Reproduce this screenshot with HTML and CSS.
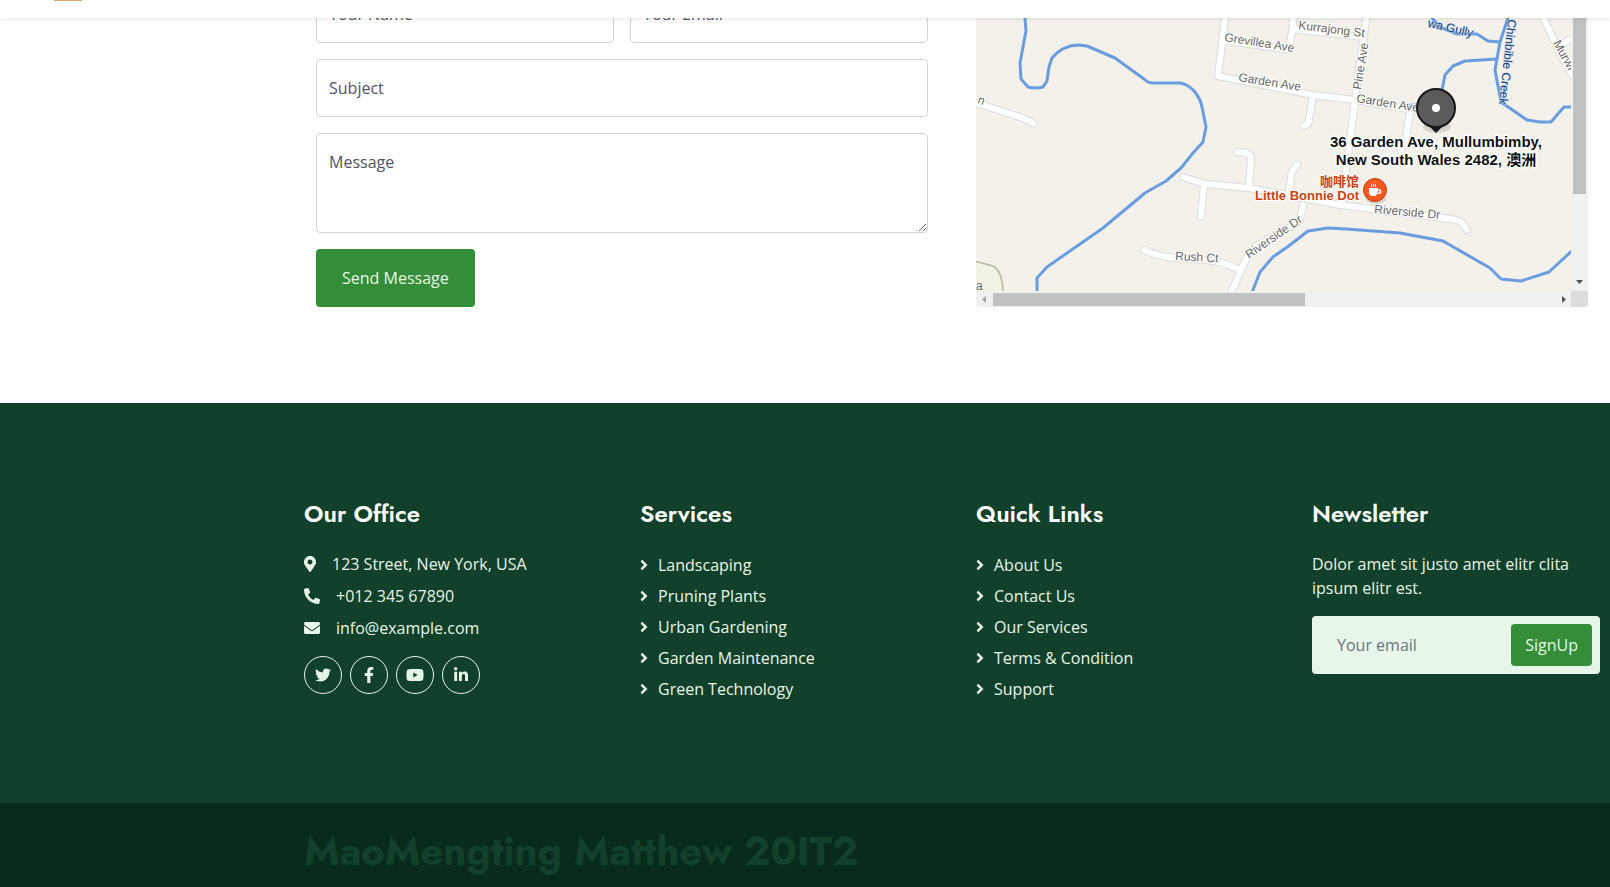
FILE: index.html
```html
<!DOCTYPE html>
<html lang="en">
<head>
<meta charset="utf-8">
<title>Gardener - Contact</title>
<meta name="viewport" content="width=device-width, initial-scale=1">
<link rel="stylesheet" href="styles.css">
</head>
<body>
<svg class="sprite" aria-hidden="true">
  <symbol id="chevron" viewBox="0 0 256 512"><path d="M224.3 273l-136 136c-9.400 9.400-24.600 9.400-33.900 0l-22.600-22.600c-9.400-9.400-9.400-24.600 0-33.900l96.400-96.400-96.400-96.400c-9.400-9.400-9.400-24.600 0-33.900L54.300 103c9.400-9.400 24.600-9.400 33.900 0l136 136c9.500 9.400 9.500 24.600.1 34z"/></symbol>
</svg>

<header class="topbar"><span class="logo-edge"></span></header>

<main>
  <section class="contact">
    <form class="contact-form">
      <input class="field" type="text" aria-label="Your Name" placeholder="Your Name">
      <input class="field" type="email" aria-label="Your Email" placeholder="Your Email">
      <input class="field wide" type="text" aria-label="Subject" placeholder="Subject">
      <textarea class="field wide message" aria-label="Message" placeholder="Message"></textarea>
      <button class="btn send" type="submit">Send Message</button>
    </form>

    <div class="map">
      <svg class="map-canvas" viewBox="976 -15 595 306" preserveAspectRatio="xMinYMin slice" role="img" aria-label="Map of Mullumbimby">
        <defs>
          <g id="roads" fill="none" stroke-linecap="round" stroke-linejoin="round">
            <path d="M1229 -15L1218 76L1313 95L1355 100L1413 110M1313 95L1309 120Q1309 125 1303 126"/>
            <path d="M1292 -15L1293 29L1363 37M1293 27L1289 47Q1288 50 1284 49L1226 41"/>
            <path d="M1371 -15L1355 100L1342 203"/>
            <path d="M1237 152L1246 153Q1252 154 1251 160L1249 188"/>
            <path d="M1183 177L1205 184L1249 188L1340 205L1420 215L1457 220Q1463 222 1467 230M1204 185L1201 217"/>
            <path d="M1297 165L1293 170Q1291 173 1291 178L1289 192"/>
            <path d="M1303 205L1301 216Q1299 223 1290 227L1258 245Q1250 250 1246 259L1230 295"/>
            <path d="M1144 250Q1158 257 1177 258L1205 260Q1222 261 1240 270"/>
            <path d="M970 101L1020 117Q1028 120 1033 123"/>
            <path d="M1410 112L1406 138L1401 152"/>
            <path d="M1528 -15L1545 21L1562 57L1580 88M1560 45L1580 34"/>
          </g>
        </defs>
        <path class="land" d="M970 -20h610v320H970z"/>
        <path class="park" d="M970 260L993 266Q1003 271 1003 295H970z"/>
        <path class="track" d="M970 260L993 266Q1003 271 1003 295"/>
        <use href="#roads" class="road-edge"/>
        <use href="#roads" class="road"/>
        <g class="water">
          <path d="M1023 -15L1025 18L1026 31L1020 63L1021 79L1028 87Q1035 89 1043 87L1047 81L1049 67L1052 58Q1063 45 1079 45L1087 46L1115 58L1144 79Q1148 83 1153 83H1180Q1188 84 1195 92Q1201 100 1202 107L1206 127L1203 142L1193 153L1181 168L1166 181L1145 193L1103 228L1047 267L1037 278V295"/>
          <path d="M1424 -15L1432 18L1440 27L1457 34H1477L1488 41L1500 42"/>
          <path d="M1513 -15L1508 18L1500 42L1495 70L1501 102L1527 120L1540 122H1551L1564 107H1575"/>
          <path d="M1497 59L1465 61L1453 66L1445 75L1442 90L1432 105H1409"/>
          <path d="M1251 295L1260 272L1273 257L1290 245L1308 231L1328 228L1346 229L1400 233L1443 241L1490 268L1501 279L1521 281L1549 272L1575 248"/>
        </g>
        <g class="street">
          <text x="1224" y="41" transform="rotate(9 1224 41)">Grevillea Ave</text>
          <text x="1298" y="29" transform="rotate(7 1298 29)">Kurrajong St</text>
          <text x="1238" y="81" transform="rotate(9 1238 81)">Garden Ave</text>
          <text x="1356" y="102" transform="rotate(9 1356 102)">Garden Ave</text>
          <text x="1361" y="90" transform="rotate(-81 1361 90)">Pine Ave</text>
          <text x="1374" y="213" transform="rotate(5 1374 213)">Riverside Dr</text>
          <text x="1249" y="259" transform="rotate(-35 1249 259)">Riverside Dr</text>
          <text x="1175" y="260" transform="rotate(3 1175 260)">Rush Ct</text>
          <text x="1553" y="43" transform="rotate(61 1553 43)">Murwi</text>
          <text x="977" y="103" transform="rotate(18 977 103)">n</text>
          <text x="976" y="290">a</text>
        </g>
        <g class="street stream">
          <text x="1472" y="37" text-anchor="end" transform="rotate(13 1472 37)">wa Gully</text>
          <text x="1508" y="19" transform="rotate(96 1508 19)">Chinbible Creek</text>
        </g>
        <g>
          <ellipse class="shade" cx="1437" cy="127" rx="14" ry="6"/>
          <path class="pin-tip" d="M1427 124L1436 133L1445 124z"/>
          <circle class="pin" cx="1436" cy="108" r="19"/>
          <circle class="white" cx="1436" cy="108" r="4"/>
        </g>
        <g class="place" text-anchor="middle">
          <text x="1436" y="147">36 Garden Ave, Mullumbimby,</text>
          <text x="1436" y="165">New South Wales 2482, 澳洲</text>
        </g>
        <g class="cafe" text-anchor="end">
          <text x="1359" y="186">咖啡馆</text>
          <text x="1359" y="200">Little Bonnie Dot</text>
        </g>
        <ellipse class="shade" cx="1376" cy="199" rx="10" ry="5"/>
        <circle class="cafe-dot" cx="1375" cy="190" r="11.500"/>
        <path class="white" d="M1369 188h9v1h1a2.500 2.500 0 0 1 0 5h-2l-1 2h-5l-2-2.500zM1378 190v3a1.500 1.500 0 0 0 0-3zM1371 184h1v3h-1zM1373 184h1v3h-1zM1375 184h1v3h-1z"/>
      </svg>
      <div class="vbar" aria-hidden="true"><span class="vthumb"></span><svg class="arrow" viewBox="0 0 7 4"><path d="M0 0h7L3.500 4z"/></svg></div>
      <div class="hbar" aria-hidden="true"><svg class="arrow side dim" viewBox="0 0 4 7"><path d="M4 0v7L0 3.500z"/></svg><span class="track-area"><span class="hthumb"></span></span><svg class="arrow side" viewBox="0 0 4 7"><path d="M0 0v7l4-3.500z"/></svg></div>
      <div class="corner"></div>
    </div>
  </section>
</main>

<footer>
  <div class="columns">
    <section>
      <h4>Our Office</h4>
      <p class="line"><svg width="12" height="16" viewBox="0 0 384 512"><path d="M172.300 501.700C27 291 0 269.400 0 192 0 86 86 0 192 0s192 86 192 192c0 77.400-27 99-172.300 309.700-9.500 13.800-29.900 13.800-39.400 0zM192 272c44.200 0 80-35.800 80-80s-35.800-80-80-80-80 35.800-80 80 35.800 80 80 80z"/></svg>123 Street, New York, USA</p>
      <p class="line"><svg width="16" height="16" viewBox="0 0 512 512"><path d="M493.400 24.600l-104-24c-11.300-2.600-22.900 3.300-27.500 13.900l-48 112c-4.200 9.800-1.400 21.300 6.900 28l60.600 49.600c-36 76.700-98.900 140.500-177.200 177.200l-49.600-60.600c-6.800-8.300-18.200-11.100-28-6.900l-112 48C3.900 366.500-2 378.100.6 389.400l24 104C27.100 504.200 36.700 512 48 512c256.100 0 464-207.500 464-464 0-11.200-7.700-20.900-18.600-23.400z" transform="matrix(-1 0 0 1 512 0)"/></svg>+012 345 67890</p>
      <p class="line"><svg width="16" height="16" viewBox="0 0 512 512"><path d="M502.300 190.800c3.900-3.100 9.700-.2 9.700 4.700V400c0 26.500-21.500 48-48 48H48c-26.500 0-48-21.500-48-48V195.600c0-5 5.700-7.800 9.700-4.700 22.400 17.400 52.100 39.500 154.100 113.600 21.100 15.400 56.700 47.800 92.200 47.600 35.700.3 72-32.800 92.300-47.600 102-74.100 131.600-96.300 154-113.700zM256 320c23.200.4 56.600-29.200 73.400-41.400 132.700-96.300 142.800-104.700 173.400-128.700 5.800-4.500 9.200-11.500 9.200-18.900v-19c0-26.500-21.500-48-48-48H48c-26.500 0-48 21.500-48 48v19c0 7.400 3.400 14.300 9.200 18.900 30.600 23.900 40.700 32.400 173.400 128.700 16.800 12.200 50.200 41.800 73.400 41.400z"/></svg>info@example.com</p>
      <div class="social">
        <a href="#" aria-label="Twitter"><svg width="16" height="16" viewBox="0 0 512 512"><path d="M459.370 151.716c.325 4.548.325 9.097.325 13.645 0 138.720-105.583 298.558-298.558 298.558-59.452 0-114.680-17.219-161.137-47.106 8.447.974 16.568 1.299 25.340 1.299 49.055 0 94.213-16.568 130.274-44.832-46.132-.975-84.792-31.188-98.112-72.772 6.498.974 12.995 1.624 19.818 1.624 9.421 0 18.843-1.300 27.614-3.573-48.081-9.747-84.143-51.980-84.143-102.985v-1.299c13.969 7.797 30.214 12.670 47.431 13.319-28.264-18.843-46.781-51.005-46.781-87.391 0-19.492 5.197-37.360 14.294-52.954 51.655 63.675 129.300 105.258 216.365 109.807-1.624-7.797-2.599-15.918-2.599-24.040 0-57.828 46.782-104.934 104.934-104.934 30.213 0 57.502 12.670 76.670 33.137 23.715-4.548 46.456-13.320 66.599-25.340-7.798 24.366-24.366 44.833-46.132 57.827 21.117-2.273 41.584-8.122 60.426-16.243-14.292 20.791-32.161 39.308-52.628 54.253z"/></svg></a>
        <a href="#" aria-label="Facebook"><svg width="10" height="16" viewBox="0 0 320 512"><path d="M279.140 288l14.220-92.660h-88.910v-60.130c0-25.350 12.420-50.060 52.240-50.060h40.420V6.260S260.430 0 225.360 0c-73.220 0-121.080 44.380-121.080 124.720v70.620H22.890V288h81.390v224h100.170V288z"/></svg></a>
        <a href="#" aria-label="YouTube"><svg width="18" height="16" viewBox="0 0 576 512"><path d="M549.655 124.083c-6.281-23.650-24.787-42.276-48.284-48.597C458.781 64 288 64 288 64S117.220 64 74.629 75.486c-23.497 6.322-42.003 24.947-48.284 48.597-11.412 42.867-11.412 132.305-11.412 132.305s0 89.438 11.412 132.305c6.281 23.650 24.787 41.500 48.284 47.821C117.220 448 288 448 288 448s170.780 0 213.371-11.486c23.497-6.321 42.003-24.171 48.284-47.821 11.412-42.867 11.412-132.305 11.412-132.305s0-89.438-11.412-132.305zm-317.510 213.508V175.185l142.739 81.205-142.739 81.201z"/></svg></a>
        <a href="#" aria-label="LinkedIn"><svg width="14" height="16" viewBox="0 0 448 512"><path d="M100.280 448H7.400V148.900h92.880zM53.790 108.100C24.090 108.100 0 83.500 0 53.800a53.790 53.790 0 0 1 107.580 0c0 29.700-24.100 54.300-53.790 54.300zM447.900 448h-92.680V302.400c0-34.700-.7-79.200-48.290-79.200-48.290 0-55.690 37.700-55.690 76.700V448h-92.780V148.900h89.080v40.800h1.300c12.400-23.500 42.690-48.300 87.880-48.300 94 0 111.280 61.900 111.280 142.300V448z"/></svg></a>
      </div>
    </section>
    <section>
      <h4>Services</h4>
      <nav class="links">
        <a href="#"><svg><use href="#chevron"/></svg>Landscaping</a>
        <a href="#"><svg><use href="#chevron"/></svg>Pruning Plants</a>
        <a href="#"><svg><use href="#chevron"/></svg>Urban Gardening</a>
        <a href="#"><svg><use href="#chevron"/></svg>Garden Maintenance</a>
        <a href="#"><svg><use href="#chevron"/></svg>Green Technology</a>
      </nav>
    </section>
    <section>
      <h4>Quick Links</h4>
      <nav class="links">
        <a href="#"><svg><use href="#chevron"/></svg>About Us</a>
        <a href="#"><svg><use href="#chevron"/></svg>Contact Us</a>
        <a href="#"><svg><use href="#chevron"/></svg>Our Services</a>
        <a href="#"><svg><use href="#chevron"/></svg>Terms &amp; Condition</a>
        <a href="#"><svg><use href="#chevron"/></svg>Support</a>
      </nav>
    </section>
    <section>
      <h4>Newsletter</h4>
      <p class="blurb">Dolor amet sit justo amet elitr clita ipsum elitr est.</p>
      <form class="signup">
        <input type="email" aria-label="Your email" placeholder="Your email">
        <button class="btn" type="submit">SignUp</button>
      </form>
    </section>
  </div>
  <div class="copyright"><h1>MaoMengting Matthew 20IT2</h1></div>
</footer>
</body>
</html>
```
FILE: styles.css
```css
:root {
  --primary: #348e38;
  --light: #e8f5e9;
  --dark: #11412a;
  --heading: Jost, "Lato", sans-serif;
}

* { box-sizing: border-box; }

body {
  margin: 0;
  overflow-x: clip;
  background: #fff;
  color: #525368;
  font: 16px/24px "Open Sans", sans-serif;
}

h1, h4, p { margin: 0; }
a { color: inherit; text-decoration: none; }
input, textarea, button { font: inherit; }
.sprite { position: absolute; width: 0; height: 0; }

.topbar {
  position: fixed;
  top: 0;
  left: 0;
  right: 0;
  z-index: 10;
  height: 18px;
  background: #fff;
  box-shadow: 0 2px 4px rgba(0, 0, 0, .075);
}
.logo-edge { display: block; width: 28px; height: 1px; margin-left: 54px; background: #dba565; }

/* The page is shown scrolled: the first row runs under the top bar. */
main { display: flow-root; }
.contact {
  display: grid;
  grid-template-columns: 1fr 1fr;
  gap: 48px;
  margin-top: -15px;
  padding: 0 22px 96px 316px;
}
.contact-form {
  display: grid;
  grid-template-columns: 1fr 1fr;
  gap: 16px;
  align-content: start;
}
.field {
  display: block;
  width: 100%;
  min-width: 0;
  height: 58px;
  padding: 16px 12px;
  border: 1px solid #ced4da;
  border-radius: 4px;
  background: #fff;
  color: #525368;
  outline: 0;
}
.field::placeholder { color: #525368; opacity: 1; }
.wide { grid-column: 1 / -1; }
.message { height: 100px; resize: vertical; }

.btn {
  border: 0;
  border-radius: 4px;
  background: var(--primary);
  color: var(--light);
}
.send { grid-column: 1 / -1; justify-self: start; height: 58px; padding: 0 26px; }

.map {
  display: grid;
  grid-template-columns: 1fr 17px;
  grid-template-rows: 1fr 16px;
  overflow: hidden;
  border-radius: 4px;
  background: #f1f1f1;
}
.map-canvas { display: block; width: 100%; height: 100%; }
.land { fill: #f3f1e9; }
.park { fill: #f1f2e4; }
.track { fill: none; stroke: #b5b6a4; stroke-width: 1.5; }
.road-edge { stroke: #dddcdc; stroke-width: 8; }
.road { stroke: #fff; stroke-width: 6; }
.water { fill: none; stroke: #6a9de0; stroke-width: 3; stroke-linejoin: round; }
.street { font: 12px "Liberation Sans", Arial, sans-serif; }
.street text { fill: #666; stroke: #fff; stroke-width: 2; paint-order: stroke; }
.stream text { fill: #1c4478; stroke: #c9def5; stroke-width: 1; }
.place { font: bold 15px "Liberation Sans", "Noto Sans CJK SC", sans-serif; }
.place text { fill: #111; stroke: #fff; stroke-width: 3; paint-order: stroke; }
.cafe { font: bold 13px "Liberation Sans", "Noto Sans CJK SC", sans-serif; }
.cafe text { fill: #c8430f; stroke: #fff; stroke-width: 2; paint-order: stroke; }
.cafe-dot { fill: #f4591f; stroke: #c7400f; }
.pin { fill: #5c5a5a; stroke: #161616; stroke-width: 2; }
.pin-tip { fill: #161616; }
.shade { fill: #000; opacity: .12; }
.white { fill: #fff; }

.vbar {
  display: flex;
  flex-direction: column;
  align-items: center;
  justify-content: space-between;
  padding-bottom: 7px;
}
.vthumb { width: 13px; height: 70%; background: #c1c1c1; }
.arrow { width: 7px; height: 4px; fill: #505050; }
.side { width: 4px; height: 7px; }
.dim { fill: #a3a3a3; }
.hbar { display: flex; align-items: center; gap: 9px; padding: 0 5px 0 6px; }
.track-area { flex: 1; }
.hthumb { display: block; width: 56%; height: 13px; margin-left: -2px; background: #c1c1c1; }
.corner { background: #dcdcdc; }

footer { background: var(--dark); color: var(--light); }
.columns {
  display: grid;
  grid-template-columns: repeat(4, minmax(0, 1fr));
  gap: 48px;
  padding: 96px 10px 96px 304px;
}
h4 { margin-bottom: 24px; color: #fff; font: 600 24px/29px var(--heading); }
.line { display: flex; align-items: center; gap: 16px; margin-bottom: 8px; }
svg { fill: currentColor; }
.social { display: flex; gap: 8px; padding-top: 8px; }
.social a {
  display: grid;
  place-items: center;
  width: 38px;
  height: 38px;
  border: 1px solid var(--light);
  border-radius: 50%;
}
.links { display: grid; gap: 5px; padding-bottom: 5px; }
.links a { display: flex; align-items: center; gap: 10px; line-height: 26px; }
.links svg { width: 8px; height: 16px; }
.blurb { margin-bottom: 16px; }
.signup {
  display: flex;
  height: 58px;
  padding: 8px 8px 8px 25px;
  border-radius: 4px;
  background: var(--light);
}
.signup input { flex: 1; min-width: 0; padding: 0; border: 0; outline: 0; background: transparent; color: #525368; }
.signup input::placeholder { color: #6c757d; opacity: 1; }
.signup .btn { padding: 0 14px; }

.copyright { padding: 24px 10px 24px 304px; background: #082b1b; }
h1 { color: var(--dark); font: 700 40px/48px var(--heading); }
```
